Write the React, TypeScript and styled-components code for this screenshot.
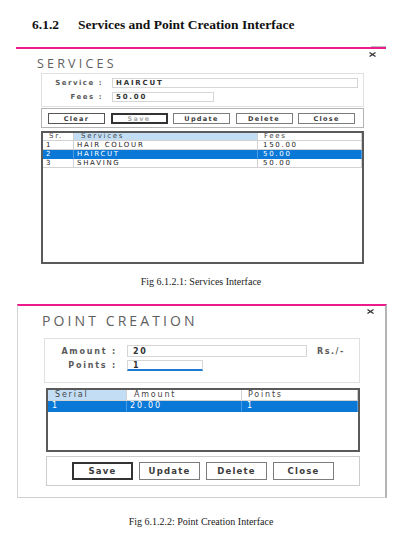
import React from "react";
import styled, { createGlobalStyle, css } from "styled-components";

const GlobalStyle = createGlobalStyle`
  html, body { margin: 0; padding: 0; background: #fff; }
  body { font-family: "DejaVu Sans", Verdana, sans-serif; }
  * { box-sizing: border-box; }
`;

const Page = styled.div`
  width: 412px;
  height: 546px;
  overflow: hidden;
  background: #fff;
  display: flex;
  flex-direction: column;
`;

const Heading = styled.h2`
  margin: 17px 0 14px 32px;
  display: flex;
  font: bold 13.5px/16px "Liberation Serif", "Times New Roman", serif;
  color: #111;
`;

const HeadingNum = styled.span`
  width: 46px;
`;

const Window = styled.section<{ $framed?: boolean; $left: number; $mt?: number }>`
  position: relative;
  width: 370px;
  margin: ${(p) => p.$mt ?? 0}px 0 0 ${(p) => p.$left}px;
  border-top: 2px solid #ec1a8d;
  display: flex;
  flex-direction: column;
  ${(p) =>
    p.$framed
      ? css`
          border-left: 1px solid #d4d4d4;
          border-right: 2px solid #b4b4b4;
          border-bottom: 1px solid #cfcfcf;
          padding: 0 25px 11px 26px;
        `
      : css`
          padding: 0 22px 0 25px;
        `}
`;

const TopNotch = styled.div`
  position: absolute;
  top: -3px;
  right: 0;
  width: 15px;
  height: 1px;
  background: #bdbdbd;
`;

const CloseMark = styled.svg<{ $right: number }>`
  position: absolute;
  top: 2.5px;
  right: ${(p) => p.$right}px;
  width: 7px;
  height: 5px;
`;

const WindowTitle = styled.h1<{ $big?: boolean }>`
  margin: ${(p) => (p.$big ? "7px 0 0 -2px" : "8px 0 0 -4px")};
  font-family: "Open Sans", "Liberation Sans", sans-serif;
  font-weight: 400;
  font-size: ${(p) => (p.$big ? 14 : 12.5)}px;
  line-height: ${(p) => (p.$big ? 16 : 14)}px;
  letter-spacing: ${(p) => (p.$big ? 3.1 : 3.2)}px;
  color: #606060;
`;

const GroupBox = styled.div<{ $h: number; $mt: number; $pt: number; $gap: number }>`
  height: ${(p) => p.$h}px;
  margin-top: ${(p) => p.$mt}px;
  padding-top: ${(p) => p.$pt}px;
  border: 1px solid #e0e0e0;
  display: flex;
  flex-direction: column;
  gap: ${(p) => p.$gap}px;
`;

const FieldRow = styled.div<{ $h: number }>`
  height: ${(p) => p.$h}px;
  display: flex;
  align-items: center;
`;

const FieldLabel = styled.span<{ $w: number; $big?: boolean }>`
  width: ${(p) => p.$w}px;
  margin-right: ${(p) => (p.$big ? 10 : 9)}px;
  text-align: right;
  white-space: nowrap;
  font-weight: bold;
  font-size: ${(p) => (p.$big ? 8 : 7)}px;
  letter-spacing: ${(p) => (p.$big ? 1.8 : 1.5)}px;
  color: #5a5a5a;
`;

const TextInput = styled.div<{ $w: number; $big?: boolean; $focused?: boolean }>`
  width: ${(p) => p.$w}px;
  height: 100%;
  padding-left: ${(p) => (p.$big ? 5 : 3)}px;
  border: 1px solid #d6d6d6;
  ${(p) =>
    p.$focused &&
    css`
      border-bottom: 2px solid #1f7ad2;
    `}
  display: flex;
  align-items: center;
  white-space: nowrap;
  font-weight: bold;
  font-size: ${(p) => (p.$big ? 8 : 7)}px;
  letter-spacing: ${(p) => (p.$big ? 1.6 : 1.8)}px;
  color: #333;
`;

const Unit = styled.span`
  margin-left: 10px;
  font-weight: bold;
  font-size: 8px;
  letter-spacing: 1.5px;
  color: #5a5a5a;
`;

const ButtonBar = styled.div<{ $big?: boolean }>`
  display: flex;
  ${(p) =>
    p.$big
      ? css`
          height: 30px;
          margin: 4px 0 0 2px;
          padding-top: 5px;
          justify-content: center;
          gap: 6px;
          border: 1px solid #cccccc;
        `
      : css`
          height: 20px;
          margin-top: 1px;
          padding: 4px 0 0 6px;
          gap: 5.5px;
          border: 1px solid #b4b4b4;
        `}
`;

const ActionButton = styled.div<{ $big?: boolean; $default?: boolean; $muted?: boolean; $dark?: boolean }>`
  width: ${(p) => (p.$big ? 61 : 57)}px;
  height: ${(p) => (p.$big ? 18 : 11)}px;
  display: flex;
  align-items: center;
  justify-content: center;
  background: #fff;
  border: ${(p) => (p.$default ? "2px solid #333" : p.$dark ? "1px solid #555" : "1px solid #7c7c7c")};
  font-weight: bold;
  font-size: ${(p) => (p.$big ? 8.5 : 6.5)}px;
  letter-spacing: ${(p) => (p.$big ? 1.2 : 1.3)}px;
  color: ${(p) => (p.$muted ? "#a8a8a8" : "#3a3a3a")};
`;

const GridFrame = styled.div<{ $h: number; $mt: number; $ml?: number }>`
  height: ${(p) => p.$h}px;
  margin: ${(p) => p.$mt}px 0 0 ${(p) => p.$ml ?? 0}px;
  border: 2px solid #5a5a5a;
  background: #fff;
  overflow: hidden;
`;

const GridRow = styled.div<{ $cols: string; $h: number; $sel?: boolean; $big?: boolean }>`
  display: grid;
  grid-template-columns: ${(p) => p.$cols};
  height: ${(p) => p.$h}px;
  line-height: ${(p) => p.$h - 1}px;
  font-size: ${(p) => (p.$big ? 8 : 7)}px;
  letter-spacing: ${(p) => (p.$big ? 1.8 : 1.7)}px;
  background: ${(p) => (p.$sel ? "#0a78d6" : "#fff")};
  color: ${(p) => (p.$sel ? "#fff" : "#222")};
  white-space: nowrap;
`;

const GridCell = styled.div<{ $pad: number; $hl?: boolean; $head?: boolean; $sel?: boolean }>`
  padding-left: ${(p) => p.$pad}px;
  overflow: hidden;
  border-right: 1px solid ${(p) => (p.$sel ? "#4b9ce3" : "#d2d2d2")};
  border-bottom: 1px solid ${(p) => (p.$sel ? "#0a78d6" : "#d2d2d2")};
  background: ${(p) => (p.$hl ? "#c2ddf4" : "transparent")};
  color: ${(p) => (p.$head ? "#444" : "inherit")};
`;

const Caption = styled.p<{ $mt: number }>`
  margin: ${(p) => p.$mt}px 0 0;
  padding-right: 10px;
  text-align: center;
  font: 10px/12px "Liberation Serif", "Times New Roman", serif;
  color: #1a1a1a;
`;

const Cross = ({ right }: { right: number }) => (
  <CloseMark $right={right} viewBox="0 0 7 5">
    <path d="M0.5 0.5 L6.5 4.5 M6.5 0.5 L0.5 4.5" stroke="#3a3a3a" strokeWidth="1.3" fill="none" />
  </CloseMark>
);

const services = [
  { sr: "1", name: "HAIR COLOUR", fee: "150.00" },
  { sr: "2", name: "HAIRCUT", fee: "50.00", sel: true },
  { sr: "3", name: "SHAVING", fee: "50.00" },
];

const COLS1 = "31px 184px 1fr";
const COLS2 = "79px 115px 1fr";

export default function App() {
  return (
    <>
      <GlobalStyle />
      <Page>
        <Heading>
          <HeadingNum>6.1.2</HeadingNum>
          <span>Services and Point Creation Interface</span>
        </Heading>

        <Window $left={16}>
          <TopNotch />
          <Cross right={10} />
          <WindowTitle>SERVICES</WindowTitle>
          <GroupBox $h={34} $mt={2} $pt={4} $gap={4}>
            <FieldRow $h={10}>
              <FieldLabel $w={61}>Service :</FieldLabel>
              <TextInput $w={246}>HAIRCUT</TextInput>
            </FieldRow>
            <FieldRow $h={10}>
              <FieldLabel $w={61}>Fees :</FieldLabel>
              <TextInput $w={102}>50.00</TextInput>
            </FieldRow>
          </GroupBox>
          <ButtonBar>
            <ActionButton $dark>Clear</ActionButton>
            <ActionButton $default $muted>Save</ActionButton>
            <ActionButton>Update</ActionButton>
            <ActionButton>Delete</ActionButton>
            <ActionButton>Close</ActionButton>
          </ButtonBar>
          <GridFrame $h={133} $mt={3}>
            <GridRow $cols={COLS1} $h={8}>
              <GridCell $pad={6} $head>Sr.</GridCell>
              <GridCell $pad={7} $head $hl>Services</GridCell>
              <GridCell $pad={6} $head>Fees</GridCell>
            </GridRow>
            {services.map((s) => (
              <GridRow key={s.sr} $cols={COLS1} $h={9} $sel={s.sel}>
                <GridCell $pad={3} $sel={s.sel}>{s.sr}</GridCell>
                <GridCell $pad={3} $sel={s.sel}>{s.name}</GridCell>
                <GridCell $pad={5} $sel={s.sel}>{s.fee}</GridCell>
              </GridRow>
            ))}
          </GridFrame>
        </Window>

        <Caption $mt={12}>Fig 6.1.2.1: Services Interface</Caption>

        <Window $left={17} $mt={16} $framed>
          <Cross right={11.5} />
          <WindowTitle $big>POINT CREATION</WindowTitle>
          <GroupBox $h={45} $mt={9} $pt={6} $gap={3}>
            <FieldRow $h={12}>
              <FieldLabel $w={72} $big>Amount :</FieldLabel>
              <TextInput $w={180} $big>20</TextInput>
              <Unit>Rs./-</Unit>
            </FieldRow>
            <FieldRow $h={11}>
              <FieldLabel $w={72} $big>Points :</FieldLabel>
              <TextInput $w={76} $big $focused>1</TextInput>
            </FieldRow>
          </GroupBox>
          <GridFrame $h={64} $mt={5} $ml={2}>
            <GridRow $cols={COLS2} $h={11} $big>
              <GridCell $pad={7} $head $hl>Serial</GridCell>
              <GridCell $pad={7} $head>Amount</GridCell>
              <GridCell $pad={6} $head>Points</GridCell>
            </GridRow>
            <GridRow $cols={COLS2} $h={11} $big $sel>
              <GridCell $pad={4} $sel>1</GridCell>
              <GridCell $pad={3} $sel>20.00</GridCell>
              <GridCell $pad={5} $sel>1</GridCell>
            </GridRow>
          </GridFrame>
          <ButtonBar $big>
            <ActionButton $big $default>Save</ActionButton>
            <ActionButton $big>Update</ActionButton>
            <ActionButton $big>Delete</ActionButton>
            <ActionButton $big>Close</ActionButton>
          </ButtonBar>
        </Window>

        <Caption $mt={18}>Fig 6.1.2.2: Point Creation Interface</Caption>
      </Page>
    </>
  );
}
